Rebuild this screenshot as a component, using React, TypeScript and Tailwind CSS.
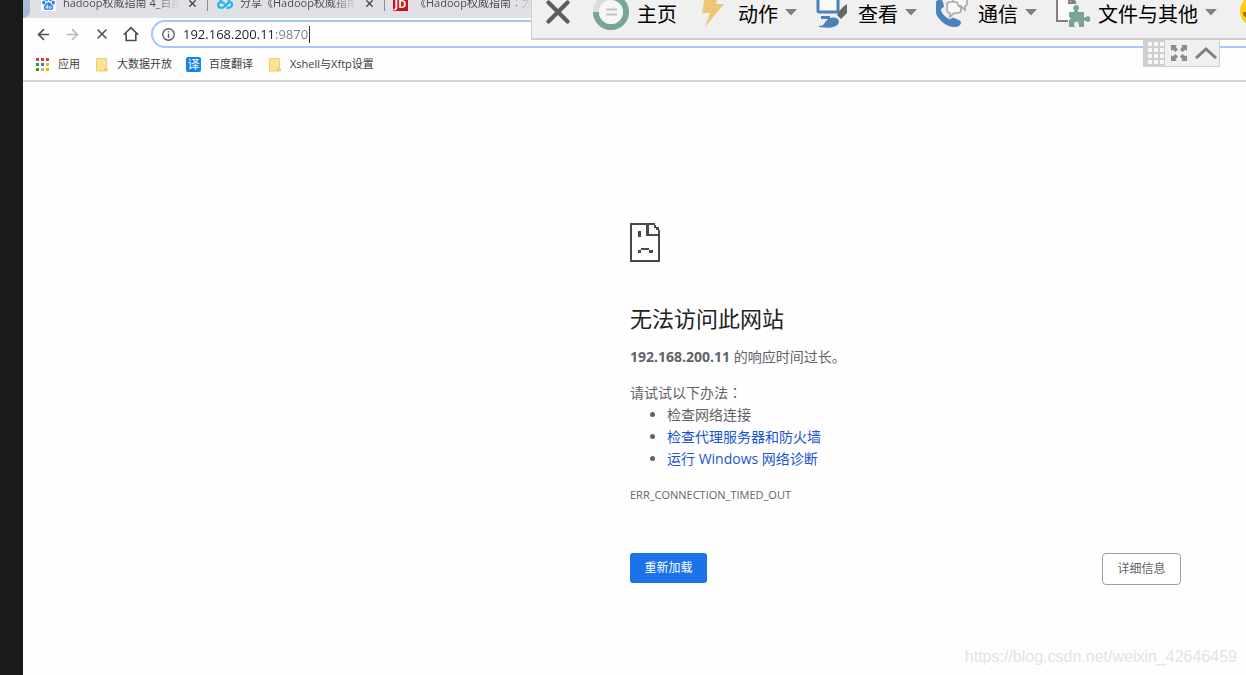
import React from "react";
import { X, ArrowLeft, ArrowRight } from "lucide-react";

const BaiduIcon = () => (
  <svg viewBox="0 0 16 16" className="size-[15px] shrink-0" aria-hidden="true">
    <rect width="16" height="16" rx="1" fill="#fff" />
    <g fill="#2b7ff0">
      <ellipse cx="3" cy="7" rx="1.7" ry="2.2" />
      <ellipse cx="6" cy="3.4" rx="1.7" ry="2.3" />
      <ellipse cx="10" cy="3.4" rx="1.7" ry="2.3" />
      <ellipse cx="13" cy="7" rx="1.7" ry="2.2" />
      <path d="M8 6.600c-2 0-2.600 2-4 3.200-1.500 1.300-1.500 5 1.400 5 1 0 1.600-.3 2.600-.3s1.600.3 2.600.3c2.900 0 2.900-3.700 1.400-5C10.600 8.600 10 6.600 8 6.600z" />
    </g>
    <path d="M6.800 9v4H5.400v-2h1.400M8.600 10.500V13h2v-2.500" fill="none" stroke="#fff" strokeWidth=".9" />
  </svg>
);

const CloudIcon = () => (
  <svg viewBox="0 0 16 16" className="size-[16px] shrink-0" aria-hidden="true" fill="none" strokeWidth="2.100" strokeLinecap="round">
    <path d="M3.500 6.300C4.500 2.500 11 2.500 12 6" stroke="#29a9f5" />
    <path d="M9 9.500 7.500 11.500C5 13.800 1.200 12.900 1.200 9.900S5 6.500 7 8.300M8.500 11 11 8c2-2 4-.6 4 1.500 0 2.600-2.500 3.400-4.500 3.400" stroke="#17b7e8" />
  </svg>
);

const HomeIcon = () => (
  <svg viewBox="0 0 16 16" className="size-[16px]" aria-hidden="true" fill="none" stroke="#484b50" strokeWidth="1.600">
    <path d="M.8 8.800 8 1.600l7.200 7.200M3.200 7.500v7h9.600v-7" />
  </svg>
);

const InfoIcon = () => (
  <svg viewBox="0 0 14 14" className="size-[13px] shrink-0" aria-hidden="true">
    <circle cx="7" cy="7" r="6.200" fill="none" stroke="#55585d" strokeWidth="1.400" />
    <path d="M7 6.200v4.200M7 3.400v1.500" stroke="#55585d" strokeWidth="1.500" />
  </svg>
);

const appColors = ["#e33b2e", "#e33b2e", "#e33b2e", "#2c9a4b", "#2a7de1", "#f2b01e", "#2c9a4b", "#f2b01e", "#f2b01e"];
const AppsIcon = () => (
  <svg viewBox="0 0 13 13" className="size-[13px] shrink-0" aria-hidden="true">
    {appColors.map((c, i) => (
      <rect key={i} x={(i % 3) * 5} y={Math.floor(i / 3) * 5} width="3" height="3" fill={c} />
    ))}
  </svg>
);

const FolderIcon = () => (
  <svg viewBox="0 0 12 14" className="h-[14px] w-[12px] shrink-0" aria-hidden="true">
    <path d="M.5.500h10v10.500h1v2H.5z" fill="#fde293" stroke="#f0cf6a" />
    <path d="M8.500 13v-2h2" fill="none" stroke="#e9c350" />
  </svg>
);

const SadPageIcon = () => (
  <svg viewBox="0 0 30 39" className="block h-[39px] w-[30px]" aria-hidden="true" fill="#484848" shapeRendering="crispEdges">
    <path d="M0 0h25v2H2v35h26V7h2v32H0z" />
    <path d="M16 0h3v11h11v2H16zM24 2h2v3h-2zM26 4h3v3h-3zM8 8h3v6H8zM11 25h8v2h-8zM8 27h3v3H8zM19 27h4v3h-4z" />
  </svg>
);

const SessionIcon = () => (
  <svg viewBox="0 -2 36 36" className="size-[36px] overflow-visible" aria-hidden="true" fill="none">
    <circle cx="18" cy="18" r="15" stroke="#dcdcdc" strokeWidth="6" />
    <path d="M3 18a15 15 0 1 0 15-15" stroke="#78a594" strokeWidth="6" />
    <circle cx="18" cy="18" r="12" fill="#f6f6f6" />
    <path d="M13 15.500h11M13 20.500h11" stroke="#c4c4c4" strokeWidth="2" />
  </svg>
);

const BoltIcon = () => (
  <svg viewBox="0 0 24 34" className="h-[34px] w-[24px]" aria-hidden="true">
    <path d="M5 -2h14l-4 12h8L4 33l5-14H1z" fill="#f0c578" />
  </svg>
);

const ViewIcon = () => (
  <svg viewBox="0 0 32 34" className="h-[34px] w-[32px]" aria-hidden="true">
    <rect x="2" y="1" width="20" height="17" rx="1" fill="#fafafa" stroke="#4b82bd" strokeWidth="3" />
    <path d="M5 22h9v3H5z" fill="#4b82bd" />
    <path d="M31 10v9l-6 6-4-4c2-4 5-8 10-11z" fill="#666" />
    <path d="M3 32c5 0 5-3 8-6 4-4 11-3 12 1 0 6-8 8-20 6z" fill="#4b82bd" />
  </svg>
);

const PhoneIcon = () => (
  <svg viewBox="2 1 34 34" className="size-[34px]" aria-hidden="true">
    <path d="M4 7c2-2 4-1 5 2l1 4c0 2-3 2-3 4 1 4 4 7 8 9 2 1 3-2 5-1l5 2c3 2 2 4 0 6-9 4-22-5-24-16-1-5 0-8 3-10z" fill="#4b82bd" />
    <path d="M19 10V4c0-2 1-3 3-3h8c2 0 3 1 3 3v6c0 2-1 3-2 3v4l-4-4h-4" fill="#f8f8f8" stroke="#a8a8a8" strokeWidth="1.600" />
    <path d="M13 12c0-2 1-3 3-3h7c1 4 2 5 4 5v3c0 2-1 3-3 3h-4l-4 4v-4c-2 0-3-1-3-3z" fill="#f8f8f8" stroke="#a8a8a8" strokeWidth="1.600" />
  </svg>
);

const FilesIcon = () => (
  <svg viewBox="2 1 36 34" className="h-[34px] w-[36px]" aria-hidden="true">
    <path d="M1 0v28h20V10l-7-8V0z" fill="#fafafa" />
    <path d="M3 0v28h11M15 5l5 5h-5zM14 2l8 8" fill="none" stroke="#808080" strokeWidth="2" />
    <path d="M15 19h5c1-2-1-3-1-4 1-4 6-4 6 0 0 1-2 2-1 4h6v5c2 1 3-1 4-1 3 1 3 6 0 6-1 0-2-2-4-1v6h-5c0-2 0-3-1-5-3-1-5 1-3 5h-6v-7c2 0 2-3 0-3z" fill="#78a594" />
  </svg>
);

const EmojiIcon = () => (
  <svg viewBox="0 0 34 34" className="size-[34px] shrink-0" aria-hidden="true">
    <circle cx="16" cy="17" r="16" fill="#fdd010" />
    <path d="M3 18h14v6H8c-3 0-5-2-5-6z" fill="#9a6b20" />
  </svg>
);

const DotsIcon = () => (
  <svg viewBox="0 0 21 26" className="h-[26px] w-[21px]" aria-hidden="true">
    {[2, 8, 14, 20].map((y) => [4, 10, 16].map((x) => <rect key={`${x}-${y}`} x={x} y={y} width="4" height="4" rx="1" fill="#fafafa" />))}
  </svg>
);

const ExpandIcon = () => (
  <svg viewBox="0 0 16 16" className="size-[16px]" aria-hidden="true" fill="#8a8a8a">
    <path d="M0 0h6L4.500 1.500 7 4.500 4.500 7 1.500 4.500 0 6zM16 0v6l-1.500-1.500L11.500 7 9 4.500l2.500-3L10 0zM16 16h-6l1.500-1.500L9 11.500 11.500 9l3 2.500L16 10zM0 16v-6l1.500 1.500L4.500 9 7 11.500l-2.500 3L6 16z" />
  </svg>
);

const Caret = () => (
  <svg viewBox="0 0 12 7" className="h-[7px] w-[12px]" aria-hidden="true">
    <path d="M0 0h12L6 6.500z" fill="#808080" />
  </svg>
);

type MenuItem = { label: string; icon: React.ReactNode; caret: boolean; width: string; iconBox: string };
const menuItems: MenuItem[] = [
  { label: "主页", icon: <SessionIcon />, caret: false, width: "w-[104px]", iconBox: "w-[45px] pl-[1px]" },
  { label: "动作", icon: <BoltIcon />, caret: true, width: "w-[120px]", iconBox: "w-[42px] pl-[5px]" },
  { label: "查看", icon: <ViewIcon />, caret: true, width: "w-[120px]", iconBox: "w-[42px]" },
  { label: "通信", icon: <PhoneIcon />, caret: true, width: "w-[120px]", iconBox: "w-[42px]" },
  { label: "文件与其他", icon: <FilesIcon />, caret: true, width: "w-[184px]", iconBox: "w-[42px]" },
];

function RemoteToolbar() {
  return (
    <div className="absolute top-0 right-0 left-[531px] font-['Noto_Sans_CJK_SC',sans-serif]">
      <div className="flex h-[40px] overflow-hidden border-b-2 border-l border-[#cfcfcf] bg-[#f0f0f0]">
        <button aria-label="关闭" className="flex w-[60px] shrink-0 items-start pl-[7px]">
          <X className="-mt-[7px] size-[38px] text-[#5c5c5c]" strokeWidth={2.6} />
        </button>
        {menuItems.map((m) => (
          <button key={m.label} className={`flex h-[28px] shrink-0 items-center text-[20px] leading-[28px] text-black ${m.width}`}>
            <span className={`flex h-full shrink-0 items-end ${m.iconBox}`}>{m.icon}</span>
            <span className="whitespace-nowrap">{m.label}</span>
            {m.caret && <span className="-mt-[3px] ml-[7px]"><Caret /></span>}
          </button>
        ))}
        <button aria-label="表情" className="flex h-[28px] shrink-0 items-end"><EmojiIcon /></button>
      </div>
      <div className="-mt-px mr-[26px] ml-auto flex h-[28px] w-[77px] border border-[#cfcfcf] bg-[#f0f0f0]">
        <button aria-label="移动" className="flex items-center bg-[#cfcfcf]"><DotsIcon /></button>
        <button aria-label="全屏" className="flex flex-1 items-center justify-center"><ExpandIcon /></button>
        <button aria-label="收起" className="flex flex-1 items-center justify-center">
          <svg viewBox="0 0 22 12" className="h-[12px] w-[22px]" aria-hidden="true" fill="none" stroke="#808080" strokeWidth="3">
            <path d="M1 11 11 2l10 9" />
          </svg>
        </button>
      </div>
    </div>
  );
}

const WideColon = () => <span className="font-['Noto_Sans_CJK_TC',sans-serif] leading-none">：</span>;

const tabs = [
  { id: "baidu", title: "hadoop权威指南 4_百度", icon: <BaiduIcon /> },
  { id: "share", title: "分享《Hadoop权威指南", icon: <CloudIcon /> },
  {
    id: "jd",
    title: <>《Hadoop权威指南<WideColon />大</>,
    icon: <span className="flex h-[15px] w-[15px] shrink-0 items-center justify-center bg-[#cc1020] text-[11px] leading-[15px] font-bold text-white">JD</span>,
  },
];

function TabStrip() {
  return (
    <div className="flex h-[18px] overflow-hidden bg-[#dfe1e6]">
      <div className="w-[7px] shrink-0 rounded-br-lg bg-[#a9bbd2]" />
      {tabs.map((t) => (
        <div key={t.id} className="flex h-[12px] w-[176px] shrink-0 items-center pl-[11px] text-[11px] text-[#45484d]">
          <div className="flex h-[20px] -translate-y-[3px] items-center">
            {t.icon}
            <span className="ml-[7px] w-[116px] overflow-hidden bg-linear-to-r from-[#45484d] from-80% to-transparent bg-clip-text leading-[18px] whitespace-nowrap text-transparent">{t.title}</span>
            <button aria-label="关闭标签页" className="ml-[8px]"><X className="size-[11px]" strokeWidth={3} /></button>
            <span className="ml-[9px] h-[16px] w-px bg-[#8a8d92]" />
          </div>
        </div>
      ))}
    </div>
  );
}

function AddressBar() {
  return (
    <div className="flex h-[32px] items-center pl-[12px]">
      <button aria-label="后退" className="mr-[12px]"><ArrowLeft className="size-[17px] text-[#4c4f54]" strokeWidth={2.4} /></button>
      <button aria-label="前进" className="mr-[13px]"><ArrowRight className="size-[17px] text-[#b9bbbe]" strokeWidth={2.4} /></button>
      <button aria-label="停止" className="mr-[13px]"><X className="size-[16px] text-[#4c4f54]" strokeWidth={2.4} /></button>
      <button aria-label="主页"><HomeIcon /></button>
      <div className="ml-[12px] flex h-[28px] flex-1 items-center rounded-l-full border-2 border-r-0 border-[#a9c6fa] bg-white pl-[9px]">
        <InfoIcon />
        <input
          aria-label="地址"
          defaultValue="192.168.200.11:9870"
          className="ml-[8px] w-[126px] bg-linear-to-r from-[#202124] from-[93px] to-[#777b80] to-[93px] bg-clip-text text-[13px] leading-[20px] text-transparent outline-none"
        />
        <span className="h-[17px] w-px bg-[#333]" />
      </div>
    </div>
  );
}

function Bookmarks() {
  return (
    <nav className="flex h-[32px] items-center border-b-2 border-[#d2d3d4] pb-px pl-[13px] text-[11px] text-[#3c4043]">
      <a href="#apps" className="flex items-center gap-[9px]"><AppsIcon />应用</a>
      <a href="#bigdata" className="ml-[16px] flex items-center gap-[9px]"><FolderIcon />大数据开放</a>
      <a href="#fanyi" className="ml-[14px] flex items-center gap-[8px]">
        <span className="flex size-[15px] items-center justify-center rounded-[2px] bg-[#1583ee] text-[12px] leading-[15px] text-white">译</span>
        百度翻译
      </a>
      <a href="#xshell" className="ml-[16px] flex items-center gap-[9px]"><FolderIcon />Xshell与Xftp设置</a>
    </nav>
  );
}

function ErrorPage() {
  return (
    <main className="mt-[141px] mr-[65px] ml-auto w-[551px] text-[14px] leading-[22px] text-[#5f6368]">
      <SadPageIcon />
      <h1 className="mt-[40px] text-[22px] leading-[32px] text-[#202124]">无法访问此网站</h1>
      <p className="mt-[12px]"><strong className="font-bold">192.168.200.11</strong> 的响应时间过长。</p>
      <p className="mt-[14px]">请试试以下办法<WideColon /></p>
      <ul className="list-disc pl-[37px]">
        <li>检查网络连接</li>
        <li><a href="#proxy" className="text-[#1a56d0]">检查代理服务器和防火墙</a></li>
        <li><a href="#diagnose" className="text-[#1a56d0]">运行 Windows 网络诊断</a></li>
      </ul>
      <p className="mt-[14px] text-[11px]">ERR_CONNECTION_TIMED_OUT</p>
      <div className="mt-[47px] flex items-start justify-between text-[12px]">
        <button className="h-[30px] w-[77px] rounded-[3px] bg-[#1a73e8] text-white">重新加载</button>
        <button className="h-[32px] w-[79px] rounded-[4px] border border-[#9aa0a6] bg-white">详细信息</button>
      </div>
    </main>
  );
}

export default function App() {
  return (
    <div className="relative flex min-h-screen bg-[#fefefe] font-['Open_Sans','Noto_Sans_CJK_SC',sans-serif]">
      <aside className="w-[23px] shrink-0 bg-[#1a1a1a]" />
      <div className="min-w-0 flex-1">
        <TabStrip />
        <AddressBar />
        <Bookmarks />
        <ErrorPage />
      </div>
      <RemoteToolbar />
      <p className="absolute right-[9px] bottom-[6px] font-['Liberation_Sans',sans-serif] text-[16px] leading-[24px] text-[#e3e3e3]">
        https://blog.csdn.net/weixin_42646459
      </p>
    </div>
  );
}
